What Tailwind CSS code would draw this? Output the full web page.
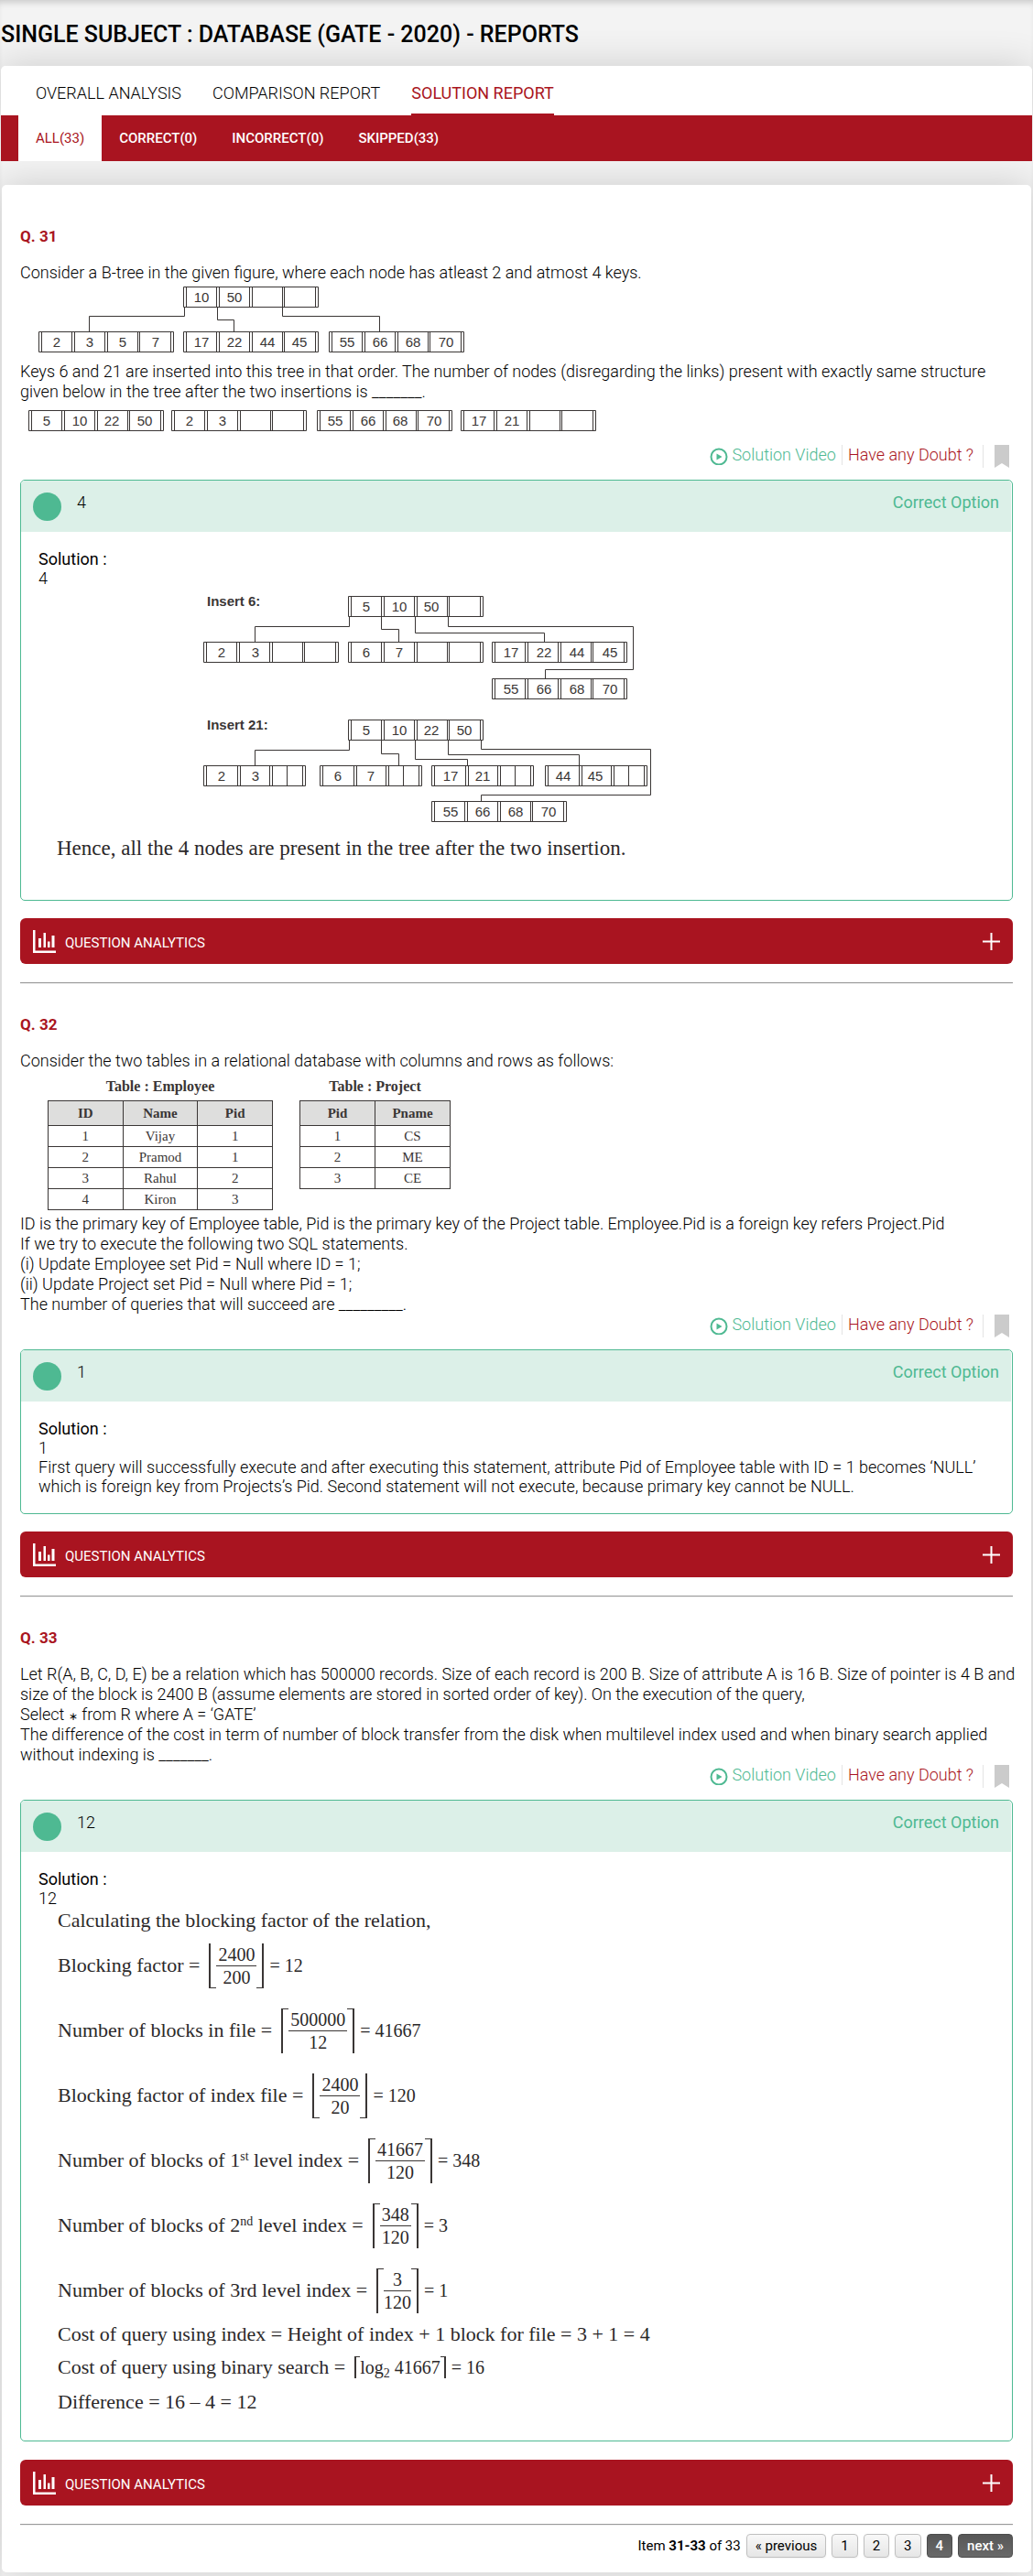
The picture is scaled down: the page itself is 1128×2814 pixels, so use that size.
<!DOCTYPE html>
<html lang="en">
<head>
<meta charset="utf-8">
<meta name="viewport" content="width=device-width, initial-scale=1">
<title>Single Subject : Database (GATE - 2020) - Reports</title>
<script src="https://cdn.jsdelivr.net/npm/@tailwindcss/browser@4"></script>
</head>
<body class="bg-[#f3f3f3] font-[Roboto,sans-serif] text-lg leading-[22px] font-light text-black">
<svg class="hidden" aria-hidden="true">
  <defs>
    <!-- B-tree node with four key cells -->
    <g id="node" fill="none" stroke="#3a3635">
      <path d="M.5 .5H147.5V22.5H.5ZM3.5 0V23M36.5 0V23M39.5 0V23M72.5 0V23M75.5 0V23M108.5 0V23M110.5 0V23M144.5 0V23"/>
    </g>
    <!-- B-tree node with two key cells and two narrow empty cells -->
    <g id="node-short" fill="none" stroke="#3a3635">
      <path d="M.5 .5H111.5V22.5H.5ZM3.5 0V23M37.5 0V23M40.5 0V23M72.5 0V23M75.5 0V23M91.5 0V23M108.5 0V23"/>
    </g>
    <g id="icon-play"><circle cx="10" cy="10" r="8.5" fill="none" stroke="#4eb992" stroke-width="2"/><path d="M7.500 6.500V13.500L13.500 10Z" fill="#4eb992"/></g>
    <path id="icon-bookmark" d="M0 0H16V25L8 20L0 25Z" fill="#cbcbcb"/>
    <path id="icon-chart" d="M0 0H2.500V22.500H25V25H0ZM6 9H9V19H6ZM11.500 3H14V19H11.500ZM16 12.500H18.500V19H16ZM20.500 6H23.500V19H20.500Z" fill="#fff"/>
    <path id="icon-plus" d="M8.500 0H10.500V8.500H19V10.500H10.500V19H8.500V10.500H0V8.500H8.500Z" fill="#fff"/>
  </defs>
</svg>

<div class="pt-px pb-1 shadow-[inset_0_6px_6px_-3px_rgba(0,0,0,0.16)]">
<header class="pl-px pt-[29px] pb-[26px]">
  <h1 class="text-[25px] leading-4 font-medium">SINGLE SUBJECT : DATABASE (GATE - 2020) - REPORTS</h1>
</header>

<div class="mx-px">
  <nav class="flex h-[54px] gap-[34px] rounded-t-[5px] bg-white px-[38px] shadow-[0_0_40px_rgba(0,0,0,0.16)]" aria-label="Reports">
    <a href="#" class="flex items-center pt-1.5">OVERALL ANALYSIS</a>
    <a href="#" class="flex items-center pt-1.5">COMPARISON REPORT</a>
    <a href="#" class="flex items-center border-b-2 border-[#a91420] pt-2 font-normal text-[#a91420]">SOLUTION REPORT</a>
  </nav>
  <nav class="relative flex h-[50px] bg-[#a91420] px-[19px] text-[15px] font-medium text-white" aria-label="Filter">
    <a href="#" class="flex items-center bg-white px-[19px] font-normal text-[#a91420]">ALL(33)</a>
    <a href="#" class="flex items-center px-[19px]">CORRECT(0)</a>
    <a href="#" class="flex items-center px-[19px]">INCORRECT(0)</a>
    <a href="#" class="flex items-center px-[19px]">SKIPPED(33)</a>
  </nav>
</div>

<main class="mx-[2px] mt-[26px] rounded-[5px] bg-white px-5 pt-[45px] pb-4 shadow-[0_0_40px_rgba(0,0,0,0.16)]">

  <section>
    <h2 class="mb-[18px] text-[17px] font-bold text-[#a91420]">Q. 31</h2>
    <p>Consider a B-tree in the given figure, where each node has atleast 2 and atmost 4 keys.</p>
    <svg width="500" height="86" viewBox="0 0 500 86" class="block" role="img" aria-label="B-tree">
      <use href="#node" x="178" y="4"/><use href="#node" x="20" y="53"/><use href="#node" x="178" y="53"/><use href="#node" x="337" y="53"/>
      <path d="M179.500 27V36.500H75.500V53M215.500 27V40.500H233.500V53M286.500 27V36.500H392.500V53" fill="none" stroke="#3a3635"/>
      <g font-family="Liberation Sans, sans-serif" font-size="15" font-weight="400" fill="#3a3635" text-anchor="middle">
        <text x="198" y="21">10</text><text x="234" y="21">50</text>
        <text x="40" y="70">2</text><text x="76" y="70">3</text><text x="112" y="70">5</text><text x="148" y="70">7</text>
        <text x="198" y="70">17</text><text x="234" y="70">22</text><text x="270" y="70">44</text><text x="305" y="70">45</text>
        <text x="357" y="70">55</text><text x="393" y="70">66</text><text x="429" y="70">68</text><text x="465" y="70">70</text>
      </g>
    </svg>
    <p>Keys 6 and 21 are inserted into this tree in that order. The number of nodes (disregarding the links) present with exactly same structure given below in the tree after the two insertions is _______.</p>
    <svg width="640" height="47" viewBox="0 0 640 47" class="block" role="img" aria-label="Four nodes">
      <use href="#node" x="9" y="9"/><use href="#node" x="165" y="9"/><use href="#node" x="324" y="9"/><use href="#node" x="481" y="9"/>
      <g font-family="Liberation Sans, sans-serif" font-size="15" font-weight="400" fill="#3a3635" text-anchor="middle">
        <text x="29" y="26">5</text><text x="65" y="26">10</text><text x="100" y="26">22</text><text x="136" y="26">50</text>
        <text x="185" y="26">2</text><text x="221" y="26">3</text>
        <text x="344" y="26">55</text><text x="380" y="26">66</text><text x="415" y="26">68</text><text x="452" y="26">70</text>
        <text x="501" y="26">17</text><text x="537" y="26">21</text>
      </g>
    </svg>
    <div class="flex h-[38px] items-start justify-end">
      <a href="#" class="flex gap-1 border-r border-[#e3e3e3] pr-1.5 text-[#4eb992]"><svg width="20" height="22" viewBox="0 -3 20 22"><use href="#icon-play"/></svg>Solution Video</a>
      <a href="#" class="px-1.5 text-[#a91420]">Have any Doubt ?</a>
      <button type="button" aria-label="Bookmark" class="ml-1 border-l border-[#e3e3e3] pr-1 pl-3"><svg width="16" height="25" class="block"><use href="#icon-bookmark"/></svg></button>
    </div>
    <div class="rounded-[5px] border border-[#4eb992]">
      <div class="mr-px flex h-14 items-start gap-[17px] rounded-t-[4px] bg-[#dcf0e8] px-[13px] pt-[13px]">
        <span class="size-[31px] rounded-full bg-[#4eb992]"></span>
        <span class="grow">4</span>
        <span class="font-normal text-[#4eb992]">Correct Option</span>
      </div>
      <div class="px-[19px] pt-[19px] pb-[19px] leading-[21px]">
        <h3 class="font-normal">Solution :</h3>
        <p>4</p>
        <svg width="680" height="260" viewBox="0 0 680 260" class="block" role="img" aria-label="Tree after inserting 6 and after inserting 21">
          <use href="#node" x="338" y="9"/><use href="#node" x="180" y="59"/><use href="#node" x="338" y="59"/><use href="#node" x="495" y="59"/><use href="#node" x="495" y="99"/>
          <use href="#node" x="338" y="144"/><use href="#node-short" x="180" y="194"/><use href="#node-short" x="307" y="194"/><use href="#node-short" x="429" y="194"/><use href="#node-short" x="553" y="194"/><use href="#node" x="429" y="233"/>
          <path d="M339.500 32V42.500H236.500V59M374.500 32V45.500H393.500V59M411.500 32V49.500H552.500V59M447.500 32V42.500H649.500V89.500H553.500V99M339.500 167V177.500H236.500V194M374.500 167V181.500H393.500V194M411.500 167V187.500H468.500V194M447.500 167V182.500H590.500V194M483.500 167V176.500H668.500V226.500H483.500V233" fill="none" stroke="#3a3635"/>
          <g font-family="Liberation Sans, sans-serif" font-size="15" font-weight="400" fill="#3a3635" text-anchor="middle">
            <text x="358" y="26">5</text><text x="394" y="26">10</text><text x="429" y="26">50</text>
            <text x="200" y="76">2</text><text x="237" y="76">3</text><text x="358" y="76">6</text><text x="394" y="76">7</text>
            <text x="516" y="76">17</text><text x="552" y="76">22</text><text x="588" y="76">44</text><text x="624" y="76">45</text>
            <text x="516" y="116">55</text><text x="552" y="116">66</text><text x="588" y="116">68</text><text x="624" y="116">70</text>
            <text x="358" y="161">5</text><text x="394" y="161">10</text><text x="429" y="161">22</text><text x="465" y="161">50</text>
            <text x="200" y="211">2</text><text x="237" y="211">3</text><text x="327" y="211">6</text><text x="363" y="211">7</text>
            <text x="450" y="211">17</text><text x="485" y="211">21</text><text x="573" y="211">44</text><text x="608" y="211">45</text>
            <text x="450" y="250">55</text><text x="485" y="250">66</text><text x="521" y="250">68</text><text x="557" y="250">70</text>
          </g>
          <g font-family="Liberation Sans, sans-serif" font-size="15" font-weight="bold" fill="#3a3635">
            <text x="184" y="20">Insert 6:</text><text x="184" y="155">Insert 21:</text>
          </g>
        </svg>
        <p class="pt-3.5 pb-[27px] pl-5 font-['Liberation_Serif',serif] text-[23px] text-[#2b2829]">Hence, all the 4 nodes are present in the tree after the two insertion.</p>
      </div>
    </div>
    <button type="button" class="mt-[19px] flex h-[50px] w-full items-center rounded-[6px] bg-[#a91420] px-3.5 text-[15px] font-normal text-white"><svg width="25" height="25"><use href="#icon-chart"/></svg><span class="grow pt-1 pl-2.5 text-left">QUESTION ANALYTICS</span><svg width="19" height="19"><use href="#icon-plus"/></svg></button>
  </section>

  <hr class="mt-5 mb-[33px] border-t border-b border-t-[#9a9a9a] border-b-[#eeeeee]">

  <section>
    <h2 class="mb-[18px] text-[17px] font-bold text-[#a91420]">Q. 32</h2>
    <p>Consider the two tables in a relational database with columns and rows as follows:</p>
    <div class="flex items-start gap-[29px] pt-[9px] pb-1 pl-[30px] text-center font-['Liberation_Serif',serif] text-[15px] leading-4 text-[#3a3635]">
      <table class="w-[246px] table-fixed border-collapse">
        <caption class="pb-[7px] text-base leading-4 font-bold">Table : Employee</caption>
        <thead><tr class="h-[27px] bg-[#dededd]"><th class="border border-[#3a3635]">ID</th><th class="border border-[#3a3635]">Name</th><th class="border border-[#3a3635]">Pid</th></tr></thead>
        <tbody>
          <tr class="h-[23px]"><td class="border border-[#3a3635]">1</td><td class="border border-[#3a3635]">Vijay</td><td class="border border-[#3a3635]">1</td></tr>
          <tr class="h-[23px]"><td class="border border-[#3a3635]">2</td><td class="border border-[#3a3635]">Pramod</td><td class="border border-[#3a3635]">1</td></tr>
          <tr class="h-[23px]"><td class="border border-[#3a3635]">3</td><td class="border border-[#3a3635]">Rahul</td><td class="border border-[#3a3635]">2</td></tr>
          <tr class="h-[23px]"><td class="border border-[#3a3635]">4</td><td class="border border-[#3a3635]">Kiron</td><td class="border border-[#3a3635]">3</td></tr>
        </tbody>
      </table>
      <table class="w-[165px] table-fixed border-collapse">
        <caption class="pb-[7px] text-base leading-4 font-bold">Table : Project</caption>
        <thead><tr class="h-[27px] bg-[#dededd]"><th class="border border-[#3a3635]">Pid</th><th class="border border-[#3a3635]">Pname</th></tr></thead>
        <tbody>
          <tr class="h-[23px]"><td class="border border-[#3a3635]">1</td><td class="border border-[#3a3635]">CS</td></tr>
          <tr class="h-[23px]"><td class="border border-[#3a3635]">2</td><td class="border border-[#3a3635]">ME</td></tr>
          <tr class="h-[23px]"><td class="border border-[#3a3635]">3</td><td class="border border-[#3a3635]">CE</td></tr>
        </tbody>
      </table>
    </div>
    <p>ID is the primary key of Employee table, Pid is the primary key of the Project table. Employee.Pid is a foreign key refers Project.Pid<br>If we try to execute the following two SQL statements.<br>(i) Update Employee set Pid = Null where ID = 1;<br>(ii) Update Project set Pid = Null where Pid = 1;<br>The number of queries that will succeed are _________.</p>
    <div class="flex h-[38px] items-start justify-end">
      <a href="#" class="flex gap-1 border-r border-[#e3e3e3] pr-1.5 text-[#4eb992]"><svg width="20" height="22" viewBox="0 -3 20 22"><use href="#icon-play"/></svg>Solution Video</a>
      <a href="#" class="px-1.5 text-[#a91420]">Have any Doubt ?</a>
      <button type="button" aria-label="Bookmark" class="ml-1 border-l border-[#e3e3e3] pr-1 pl-3"><svg width="16" height="25" class="block"><use href="#icon-bookmark"/></svg></button>
    </div>
    <div class="rounded-[5px] border border-[#4eb992]">
      <div class="mr-px flex h-14 items-start gap-[17px] rounded-t-[4px] bg-[#dcf0e8] px-[13px] pt-[13px]">
        <span class="size-[31px] rounded-full bg-[#4eb992]"></span>
        <span class="grow">1</span>
        <span class="font-normal text-[#4eb992]">Correct Option</span>
      </div>
      <div class="px-[19px] pt-[19px] pb-[19px] leading-[21px]">
        <h3 class="font-normal">Solution :</h3>
        <p>1</p>
        <p>First query will successfully execute and after executing this statement, attribute Pid of Employee table with ID = 1 becomes ‘NULL’ which is foreign key from Projects’s Pid. Second statement will not execute, because primary key cannot be NULL.</p>
      </div>
    </div>
    <button type="button" class="mt-[19px] flex h-[50px] w-full items-center rounded-[6px] bg-[#a91420] px-3.5 text-[15px] font-normal text-white"><svg width="25" height="25"><use href="#icon-chart"/></svg><span class="grow pt-1 pl-2.5 text-left">QUESTION ANALYTICS</span><svg width="19" height="19"><use href="#icon-plus"/></svg></button>
  </section>

  <hr class="mt-5 mb-[33px] border-t border-b border-t-[#9a9a9a] border-b-[#eeeeee]">

  <section>
    <h2 class="mb-[18px] text-[17px] font-bold text-[#a91420]">Q. 33</h2>
    <p class="-mr-4">Let R(A, B, C, D, E) be a relation which has 500000 records. Size of each record is 200 B. Size of attribute A is 16 B. Size of pointer is 4 B and size of the block is 2400 B (assume elements are stored in sorted order of key). On the execution of the query,<br>Select <span class="text-xs">∗</span> from R where A = ‘GATE’<br>The difference of the cost in term of number of block transfer from the disk when multilevel index used and when binary search applied without indexing is _______.</p>
    <div class="flex h-[38px] items-start justify-end">
      <a href="#" class="flex gap-1 border-r border-[#e3e3e3] pr-1.5 text-[#4eb992]"><svg width="20" height="22" viewBox="0 -3 20 22"><use href="#icon-play"/></svg>Solution Video</a>
      <a href="#" class="px-1.5 text-[#a91420]">Have any Doubt ?</a>
      <button type="button" aria-label="Bookmark" class="ml-1 border-l border-[#e3e3e3] pr-1 pl-3"><svg width="16" height="25" class="block"><use href="#icon-bookmark"/></svg></button>
    </div>
    <div class="rounded-[5px] border border-[#4eb992]">
      <div class="mr-px flex h-14 items-start gap-[17px] rounded-t-[4px] bg-[#dcf0e8] px-[13px] pt-[13px]">
        <span class="size-[31px] rounded-full bg-[#4eb992]"></span>
        <span class="grow">12</span>
        <span class="font-normal text-[#4eb992]">Correct Option</span>
      </div>
      <div class="px-[19px] pt-[19px] pb-[19px] leading-[21px]">
        <h3 class="font-normal">Solution :</h3>
        <p>12</p>
        <div class="pt-0.5 pb-[11px] pl-[21px] font-['Liberation_Serif',serif] text-[22px] leading-6 text-[#2b2829]">
          <p>Calculating the blocking factor of the relation,</p>
          <div class="mt-3 grid auto-rows-[50px] gap-y-[21px]">
            <div class="flex items-center"><span>Blocking factor =</span>
              <span class="ml-2.5 flex text-xl leading-6"><i class="w-2 border-b border-l-2 border-[#3a3635]"></i><span class="flex flex-col text-center"><span class="border-b border-[#3a3635] px-0.5">2400</span><span>200</span></span><i class="w-2 border-r-2 border-b border-[#3a3635]"></i></span><span class="pl-1.5 text-xl">= 12</span></div>
            <div class="flex items-center"><span>Number of blocks in file =</span>
              <span class="ml-2.5 flex text-xl leading-6"><i class="w-2 border-t border-l-2 border-[#3a3635]"></i><span class="flex flex-col text-center"><span class="border-b border-[#3a3635] px-0.5">500000</span><span>12</span></span><i class="w-2 border-t border-r-2 border-[#3a3635]"></i></span><span class="pl-1.5 text-xl">= 41667</span></div>
            <div class="flex items-center"><span>Blocking factor of index file =</span>
              <span class="ml-2.5 flex text-xl leading-6"><i class="w-2 border-b border-l-2 border-[#3a3635]"></i><span class="flex flex-col text-center"><span class="border-b border-[#3a3635] px-0.5">2400</span><span>20</span></span><i class="w-2 border-r-2 border-b border-[#3a3635]"></i></span><span class="pl-1.5 text-xl">= 120</span></div>
            <div class="flex items-center"><span>Number of blocks of 1<sup class="text-sm leading-none">st</sup> level index =</span>
              <span class="ml-2.5 flex text-xl leading-6"><i class="w-2 border-t border-l-2 border-[#3a3635]"></i><span class="flex flex-col text-center"><span class="border-b border-[#3a3635] px-0.5">41667</span><span>120</span></span><i class="w-2 border-t border-r-2 border-[#3a3635]"></i></span><span class="pl-1.5 text-xl">= 348</span></div>
            <div class="flex items-center"><span>Number of blocks of 2<sup class="text-sm leading-none">nd</sup> level index =</span>
              <span class="ml-2.5 flex text-xl leading-6"><i class="w-2 border-t border-l-2 border-[#3a3635]"></i><span class="flex flex-col text-center"><span class="border-b border-[#3a3635] px-0.5">348</span><span>120</span></span><i class="w-2 border-t border-r-2 border-[#3a3635]"></i></span><span class="pl-1.5 text-xl">= 3</span></div>
            <div class="flex items-center"><span>Number of blocks of 3rd level index =</span>
              <span class="ml-2.5 flex text-xl leading-6"><i class="w-2 border-t border-l-2 border-[#3a3635]"></i><span class="flex flex-col text-center"><span class="border-b border-[#3a3635] px-0.5">3</span><span>120</span></span><i class="w-2 border-t border-r-2 border-[#3a3635]"></i></span><span class="pl-1.5 text-xl">= 1</span></div>
          </div>
          <p class="mt-[11px]">Cost of query using index = Height of index + 1 block for file = 3 + 1 = 4</p>
          <div class="mt-3 flex h-6 items-center"><span>Cost of query using binary search =</span>
            <span class="ml-2.5 flex text-xl leading-6"><i class="w-1.5 border-t border-l-2 border-[#3a3635]"></i><span>log<sub class="text-sm leading-none">2</sub> 41667</span><i class="w-1.5 border-t border-r-2 border-[#3a3635]"></i></span><span class="pl-1.5 text-xl">= 16</span></div>
          <p class="mt-3.5">Difference = 16 – 4 = 12</p>
        </div>
      </div>
    </div>
    <button type="button" class="mt-5 flex h-[50px] w-full items-center rounded-[6px] bg-[#a91420] px-3.5 text-[15px] font-normal text-white"><svg width="25" height="25"><use href="#icon-chart"/></svg><span class="grow pt-1 pl-2.5 text-left">QUESTION ANALYTICS</span><svg width="19" height="19"><use href="#icon-plus"/></svg></button>
  </section>

  <hr class="mt-5 mb-[9px] border-t border-b border-t-[#9a9a9a] border-b-[#eeeeee]">

  <nav class="flex items-center justify-end gap-1.5 text-[15px] leading-6 font-normal" aria-label="Pages">
    <span>Item <b>31-33</b> of 33</span>
    <a href="#" class="rounded-[4px] border border-[#c0c0c0] bg-linear-to-b from-[#f8f8f8] to-[#e6e6e6] px-[9px] shadow-xs">« previous</a>
    <a href="#" class="rounded-[4px] border border-[#c0c0c0] bg-linear-to-b from-[#f8f8f8] to-[#e6e6e6] px-[9px] shadow-xs">1</a>
    <a href="#" class="rounded-[4px] border border-[#c0c0c0] bg-linear-to-b from-[#f8f8f8] to-[#e6e6e6] px-[9px] shadow-xs">2</a>
    <a href="#" class="rounded-[4px] border border-[#c0c0c0] bg-linear-to-b from-[#f8f8f8] to-[#e6e6e6] px-[9px] shadow-xs">3</a>
    <a href="#" aria-current="page" class="rounded-[4px] border border-[#4c4c4c] bg-linear-to-b from-[#575757] to-[#696969] px-[9px] font-medium text-white">4</a>
    <a href="#" class="rounded-[4px] border border-[#4c4c4c] bg-linear-to-b from-[#575757] to-[#696969] px-[9px] font-medium text-white">next »</a>
  </nav>
</main>
</div>
</body>
</html>
